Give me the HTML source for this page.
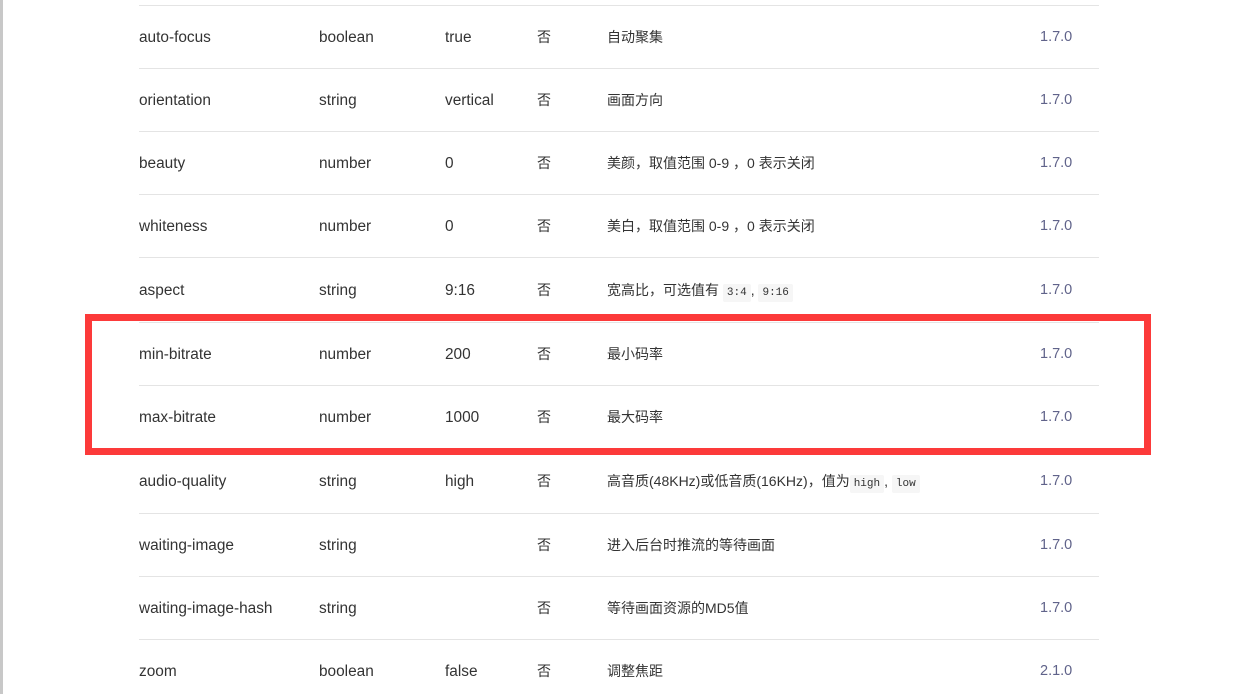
<!DOCTYPE html>
<html><head><meta charset="utf-8"><style>
body{margin:0;width:1259px;height:694px;background:#fff;overflow:hidden;position:relative;font-family:"Liberation Sans","Noto Sans CJK SC",sans-serif;font-size:14px;color:#333}
.bar{position:absolute;left:0;top:0;width:3px;height:694px;background:#c8c8c8}
.line{position:absolute;left:139px;width:960px;height:1px;background:#e4e4e4}
.t{position:absolute;line-height:20px;white-space:nowrap}
.a{font-size:15.4px;margin-top:1px}
.v{color:#60638a;font-size:14.5px}
code{font-family:"Liberation Mono",monospace;font-size:11px;background:#f6f6f6;padding:3px 4px;border-radius:2px}
.red{position:absolute;left:85px;top:314px;width:1052px;height:127px;border:7px solid #fc3a3a}
</style></head><body>
<div class="bar"></div>
<div class="line" style="top:5px"></div>
<div class="line" style="top:68px"></div>
<div class="line" style="top:131px"></div>
<div class="line" style="top:194px"></div>
<div class="line" style="top:257px"></div>
<div class="line" style="top:322px"></div>
<div class="line" style="top:385px"></div>
<div class="line" style="top:449px"></div>
<div class="line" style="top:513px"></div>
<div class="line" style="top:576px"></div>
<div class="line" style="top:639px"></div>

<div class="t a" style="top:27px;left:139px">auto-focus</div><div class="t a" style="top:27px;left:319px">boolean</div><div class="t a" style="top:27px;left:445px">true</div><div class="t" style="top:27px;left:537px">否</div><div class="t" style="top:27px;left:607px">自动聚集</div><div class="t v" style="top:27px;left:1040px">1.7.0</div>
<div class="t a" style="top:90px;left:139px">orientation</div><div class="t a" style="top:90px;left:319px">string</div><div class="t a" style="top:90px;left:445px">vertical</div><div class="t" style="top:90px;left:537px">否</div><div class="t" style="top:90px;left:607px">画面方向</div><div class="t v" style="top:90px;left:1040px">1.7.0</div>
<div class="t a" style="top:153px;left:139px">beauty</div><div class="t a" style="top:153px;left:319px">number</div><div class="t a" style="top:153px;left:445px">0</div><div class="t" style="top:153px;left:537px">否</div><div class="t" style="top:153px;left:607px">美颜，取值范围 0-9 ，0 表示关闭</div><div class="t v" style="top:153px;left:1040px">1.7.0</div>
<div class="t a" style="top:216px;left:139px">whiteness</div><div class="t a" style="top:216px;left:319px">number</div><div class="t a" style="top:216px;left:445px">0</div><div class="t" style="top:216px;left:537px">否</div><div class="t" style="top:216px;left:607px">美白，取值范围 0-9 ，0 表示关闭</div><div class="t v" style="top:216px;left:1040px">1.7.0</div>
<div class="t a" style="top:280px;left:139px">aspect</div><div class="t a" style="top:280px;left:319px">string</div><div class="t a" style="top:280px;left:445px">9:16</div><div class="t" style="top:280px;left:537px">否</div><div class="t" style="top:280px;left:607px">宽高比，可选值有 <code>3:4</code>, <code>9:16</code></div><div class="t v" style="top:280px;left:1040px">1.7.0</div>
<div class="t a" style="top:344px;left:139px">min-bitrate</div><div class="t a" style="top:344px;left:319px">number</div><div class="t a" style="top:344px;left:445px">200</div><div class="t" style="top:344px;left:537px">否</div><div class="t" style="top:344px;left:607px">最小码率</div><div class="t v" style="top:344px;left:1040px">1.7.0</div>
<div class="t a" style="top:407px;left:139px">max-bitrate</div><div class="t a" style="top:407px;left:319px">number</div><div class="t a" style="top:407px;left:445px">1000</div><div class="t" style="top:407px;left:537px">否</div><div class="t" style="top:407px;left:607px">最大码率</div><div class="t v" style="top:407px;left:1040px">1.7.0</div>
<div class="t a" style="top:471px;left:139px">audio-quality</div><div class="t a" style="top:471px;left:319px">string</div><div class="t a" style="top:471px;left:445px">high</div><div class="t" style="top:471px;left:537px">否</div><div class="t" style="top:471px;left:607px">高音质(48KHz)或低音质(16KHz)，值为<code>high</code>, <code>low</code></div><div class="t v" style="top:471px;left:1040px">1.7.0</div>
<div class="t a" style="top:535px;left:139px">waiting-image</div><div class="t a" style="top:535px;left:319px">string</div><div class="t" style="top:535px;left:537px">否</div><div class="t" style="top:535px;left:607px">进入后台时推流的等待画面</div><div class="t v" style="top:535px;left:1040px">1.7.0</div>
<div class="t a" style="top:598px;left:139px">waiting-image-hash</div><div class="t a" style="top:598px;left:319px">string</div><div class="t" style="top:598px;left:537px">否</div><div class="t" style="top:598px;left:607px">等待画面资源的MD5值</div><div class="t v" style="top:598px;left:1040px">1.7.0</div>
<div class="t a" style="top:661px;left:139px">zoom</div><div class="t a" style="top:661px;left:319px">boolean</div><div class="t a" style="top:661px;left:445px">false</div><div class="t" style="top:661px;left:537px">否</div><div class="t" style="top:661px;left:607px">调整焦距</div><div class="t v" style="top:661px;left:1040px">2.1.0</div>
<div class="red"></div>
</body></html>
